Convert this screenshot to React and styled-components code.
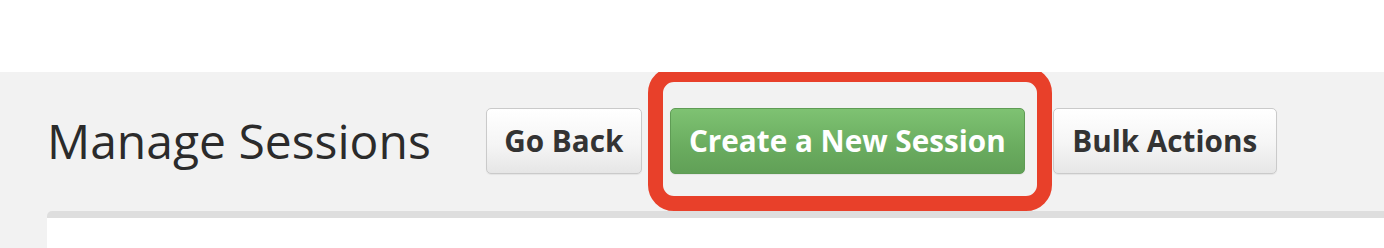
import React from "react";
import styled, { createGlobalStyle } from "styled-components";

const Global = createGlobalStyle`
  html, body { margin: 0; padding: 0; background: #ffffff; }
  body { font-family: "Open Sans", "DejaVu Sans", sans-serif; }
  * { box-sizing: border-box; }
`;

const TopSpace = styled.div`
  height: 72px;
  background: #ffffff;
`;

const Main = styled.section`
  background: #f2f2f2;
  height: 176px;
  padding-top: 36px;
  overflow: hidden;
`;

const Header = styled.div`
  display: flex;
  align-items: center;
  padding-left: 47px;
  height: 66px;
`;

const Title = styled.h1`
  margin: 0 55px 0 0;
  font-family: "Open Sans", sans-serif;
  font-weight: 400;
  font-size: 48px;
  line-height: 1;
  color: #2b2b2b;
`;

const Actions = styled.div`
  display: flex;
  align-items: center;
  gap: 28px;
`;

const Button = styled.button`
  height: 66px;
  padding: 0 ${(p) => p.$pad || 19}px;
  border-radius: 5px;
  font-family: "Open Sans", sans-serif;
  font-weight: 700;
  font-size: 29.7px;
  line-height: 1;
  cursor: pointer;
  white-space: nowrap;
  border: 1px solid ${(p) => (p.$primary ? "#5f9c55" : "#cacaca")};
  color: ${(p) => (p.$primary ? "#ffffff" : "#333333")};
  background: ${(p) =>
    p.$primary
      ? "linear-gradient(to bottom, #7ec272 0%, #6aac5f 60%, #61a057 100%)"
      : "linear-gradient(to bottom, #ffffff 0%, #f5f5f5 55%, #e6e6e6 100%)"};
  box-shadow: 0 1px 1px rgba(0, 0, 0, 0.06);
`;

const Highlighted = styled.div`
  position: relative;
  display: flex;
`;

const HighlightRing = styled.span`
  position: absolute;
  top: -41px;
  left: -22px;
  right: -27px;
  bottom: -37px;
  border: 15px solid #e8402a;
  border-radius: 26px;
  pointer-events: none;
`;

const Panel = styled.div`
  margin: 37px 0 0 47px;
  height: 40px;
  background: #ffffff;
  border-top: 7px solid #dedede;
  border-top-left-radius: 5px;
`;

export default function App() {
  return (
    <>
      <Global />
      <TopSpace />
      <Main>
        <Header>
          <Title>Manage Sessions</Title>
          <Actions>
            <Button $pad={17.5}>Go Back</Button>
            <Highlighted>
              <Button $primary $pad={18}>Create a New Session</Button>
              <HighlightRing />
            </Highlighted>
            <Button $pad={18.5}>Bulk Actions</Button>
          </Actions>
        </Header>
        <Panel />
      </Main>
    </>
  );
}
